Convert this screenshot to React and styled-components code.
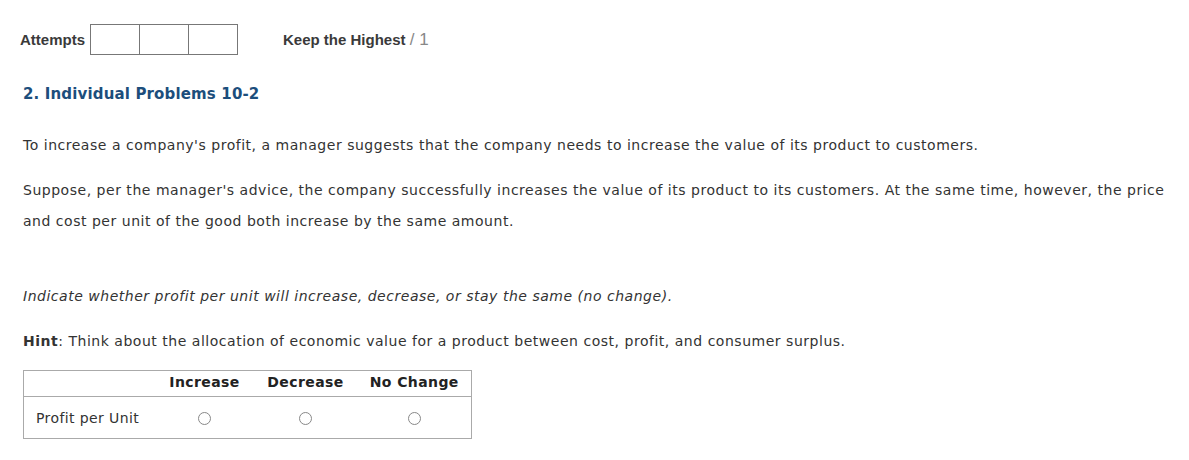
import React from "react";
import styled, { createGlobalStyle } from "styled-components";

const Global = createGlobalStyle`
  body {
    margin: 0;
    background: #fff;
    font-family: "DejaVu Sans", Verdana, sans-serif;
    color: #333;
  }
`;

const Page = styled.div`
  width: 1189px;
  height: 460px;
  overflow: hidden;
`;

const TopBar = styled.div`
  display: flex;
  align-items: center;
  padding: 24px 0 0 20px;
  height: 31px;
  font-family: "Liberation Sans", Arial, sans-serif;
`;

const Label = styled.span`
  font-size: 15px;
  font-weight: bold;
  color: #3a3a3a;
  margin-right: 5px;
`;

const Boxes = styled.div`
  display: flex;
  border: 1px solid #777;
  height: 29px;
`;

const Box = styled.div`
  width: 48px;
  & + & {
    border-left: 1px solid #777;
  }
`;

const Keep = styled.div`
  margin-left: 45px;
  font-size: 15px;
  font-weight: bold;
  color: #3a3a3a;
  span {
    font-weight: normal;
    color: #888;
    font-size: 17px;
  }
`;

const Content = styled.div`
  padding: 0 20px 0 23px;
`;

const Heading = styled.h2`
  margin: 29px 0 0;
  font-size: 15px;
  font-weight: bold;
  color: #1c4e7c;
  line-height: 20px;
  letter-spacing: 0.15px;
`;

const Para = styled.p`
  margin: ${(p) => p.$top}px 0 0;
  font-size: 14px;
  letter-spacing: 0.52px;
  line-height: 31px;
  font-style: ${(p) => (p.$italic ? "italic" : "normal")};
`;

const Table = styled.table`
  margin-top: 13px;
  border-collapse: collapse;
  border: 1px solid #aaa;
  font-size: 14px;
  letter-spacing: 0.4px;
  table-layout: fixed;
  width: 448px;
  th {
    font-weight: bold;
    color: #222;
    height: 21px;
    padding: 0 0 4px;
    border-bottom: 1px solid #aaa;
    text-align: center;
    white-space: nowrap;
  }
  td {
    height: 41px;
    padding: 0;
    text-align: center;
    white-space: nowrap;
  }
  td:first-child {
    text-align: left;
    padding-left: 12px;
  }
`;

const Radio = styled.span`
  display: inline-block;
  width: 11px;
  height: 11px;
  border: 1px solid #888;
  border-radius: 50%;
  vertical-align: middle;
`;

export default function App() {
  return (
    <Page>
      <Global />
      <TopBar>
        <Label>Attempts</Label>
        <Boxes>
          <Box />
          <Box />
          <Box />
        </Boxes>
        <Keep>
          Keep the Highest <span>/ 1</span>
        </Keep>
      </TopBar>
      <Content>
        <Heading>2. Individual Problems 10-2</Heading>
        <Para $top={26}>
          To increase a company's profit, a manager suggests that the company needs to increase the value of its product to customers.
        </Para>
        <Para $top={14}>
          Suppose, per the manager's advice, the company successfully increases the value of its product to its customers. At the same time, however, the price and cost per unit of the good both increase by the same amount.
        </Para>
        <Para $top={44} $italic>
          Indicate whether profit per unit will increase, decrease, or stay the same (no change).
        </Para>
        <Para $top={14}>
          <b>Hint</b>: Think about the allocation of economic value for a product between cost, profit, and consumer surplus.
        </Para>
        <Table>
          <colgroup>
            <col style={{ width: "132px" }} />
            <col style={{ width: "98px" }} />
            <col style={{ width: "104px" }} />
            <col style={{ width: "114px" }} />
          </colgroup>
          <thead>
            <tr>
              <th></th>
              <th>Increase</th>
              <th>Decrease</th>
              <th>No Change</th>
            </tr>
          </thead>
          <tbody>
            <tr>
              <td>Profit per Unit</td>
              <td><Radio /></td>
              <td><Radio /></td>
              <td><Radio /></td>
            </tr>
          </tbody>
        </Table>
      </Content>
    </Page>
  );
}
